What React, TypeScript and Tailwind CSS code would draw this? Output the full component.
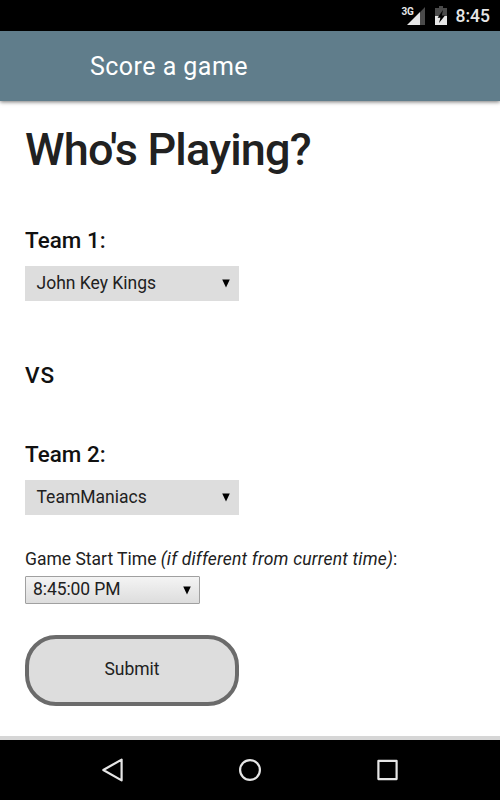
import React from 'react';

interface TeamSelectProps {
  label: string;
  value: string;
}

const Caret: React.FC = () => (
  <svg width="8" height="9" viewBox="0 0 8 9" className="shrink-0">
    <path d="M0.2 0.5h7.6L4 8.5z" fill="#000" />
  </svg>
);

const TeamSelect: React.FC<TeamSelectProps> = ({ label, value }) => (
  <div>
    <h3 className="text-[22.4px] leading-[30px] font-medium tracking-[0.05px] text-[#111]">{label}</h3>
    <button className="mt-[11px] flex h-[35px] w-[214px] items-center justify-between bg-[#dddddd] pr-[9px] pl-[11.5px] text-[17.5px] leading-[35px] text-[#212121]">
      <span>{value}</span>
      <Caret />
    </button>
  </div>
);

const StatusBar: React.FC = () => (
  <div className="flex h-[31px] shrink-0 items-start justify-end bg-black pr-[10px] text-[#e6e6e6]">
    <span className="mt-[6px] text-[10px] leading-[12px] font-bold tracking-[-0.3px]">3G</span>
    {/* Signal strength */}
    <svg width="19" height="19" viewBox="0 0 19 19" className="mt-[7px] -ml-[7px]">
      <path d="M13 5.2 18 0v18h-5z" fill="#4a4a4a" />
      <path d="M0 18 13 5v13z" fill="#e6e6e6" />
    </svg>
    {/* Charging battery */}
    <svg width="12" height="19" viewBox="0 0 12 19" className="mt-[6px] ml-[9px]">
      <path d="M4 0h4v2h4v8H0V2h4z" fill="#4a4a4a" />
      <path d="M0 10h12v9H0z" fill="#e6e6e6" />
      <path d="M8 4 2.6 11.8H5.4L4 17l6-7.5H6.8z" fill="#000" />
    </svg>
    <span className="mt-[6px] ml-[9px] text-[17.5px] leading-[21px] font-medium">8:45</span>
  </div>
);

const NavBar: React.FC = () => (
  <div className="flex h-[60px] shrink-0 items-center justify-between bg-black px-[101px]">
    <svg width="24" height="24" viewBox="0 0 24 24" fill="none" stroke="#e6e6e6" strokeWidth="2.2" strokeLinejoin="round">
      <path d="M20.6 1.6v20.8L2.3 12z" />
    </svg>
    <svg width="24" height="24" viewBox="0 0 24 24" fill="none" stroke="#e6e6e6" strokeWidth="2.2">
      <circle cx="12" cy="12" r="9.9" />
    </svg>
    <svg width="24" height="24" viewBox="0 0 24 24" fill="none" stroke="#e6e6e6" strokeWidth="2.2" strokeLinejoin="round">
      <rect x="3.4" y="2.9" width="18.2" height="18.2" />
    </svg>
  </div>
);

export default function App() {
  return (
    <div className="flex h-[800px] w-[500px] flex-col overflow-hidden bg-white font-[Roboto,sans-serif]">
      <StatusBar />
      <header className="flex h-[70px] shrink-0 items-center bg-[#607d8b] pt-0.5 pl-[90px] shadow-[0_1px_4px_rgba(0,0,0,0.55)]">
        <h1 className="text-[25px] leading-[30px] tracking-[0.46px] text-white">Score a game</h1>
      </header>

      <main className="flex-1 border-b-4 border-[#d6d6d6] px-[25px] pt-[20px]">
        <h2 className="text-[45px] leading-[58px] font-medium tracking-[-0.85px] text-[#212121]">Who's Playing?</h2>

        <div className="mt-[46px]">
          <TeamSelect label="Team 1:" value="John Key Kings" />
        </div>

        <p className="mt-[59px] text-[22.5px] leading-[30px] font-medium tracking-[1px] text-[#111]">VS</p>

        <div className="mt-[49px]">
          <TeamSelect label="Team 2:" value="TeamManiacs" />
        </div>

        <p className="mt-[34px] text-[17.5px] leading-[21px] text-[#212121]">
          Game Start Time <em className="tracking-[0.2px]">(if different from current time)</em>:
        </p>
        <button className="mt-[6px] flex h-[28px] w-[175px] items-center justify-between rounded-[1px] border border-[#a0a0a0] bg-linear-to-b from-[#f4f4f4] to-[#dddddd] pr-2 pl-[7px] text-[17.5px] leading-[24px] tracking-[-0.08px] text-[#212121]">
          <span className="pb-0.5">8:45:00 PM</span>
          <Caret />
        </button>

        <button className="mt-[31px] flex h-[71px] w-[214px] items-center justify-center rounded-[31px] border-4 border-[#6b6b6b] bg-[#dddddd] pb-0.5 text-[17.5px] text-[#212121]">
          Submit
        </button>
      </main>

      <NavBar />
    </div>
  );
}
